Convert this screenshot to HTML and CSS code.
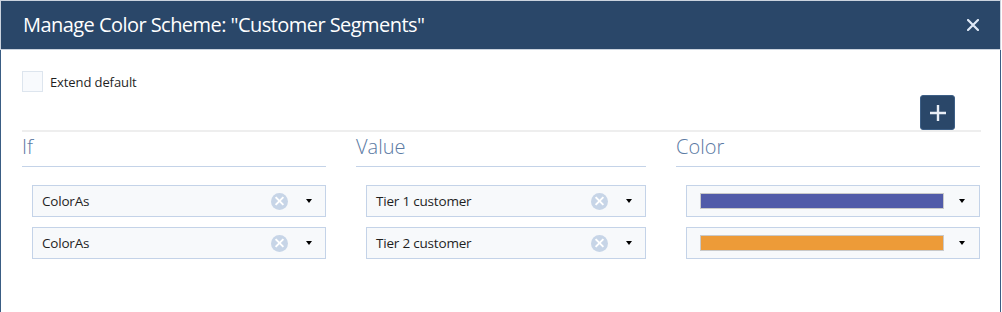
FILE: index.html
```html
<!DOCTYPE html>
<html lang="en">
  <head>
    <meta charset="UTF-8" />
    <title>Manage Color Scheme</title>
    <link rel="stylesheet" href="styles.css">
  </head>
  <body>
    <div class="dialog">
      <header class="dialog-header">
        <span class="dialog-title">Manage Color Scheme: "Customer Segments"</span>
        <button class="close-btn" aria-label="Close">
          <svg width="12" height="12" viewBox="0 0 12 12">
            <path d="M1 1 L11 11 M11 1 L1 11" stroke="#dfe8f5" stroke-width="2.2" stroke-linecap="round" />
          </svg>
        </button>
      </header>

      <div class="dialog-body">
        <label class="check-row">
          <span class="checkbox"></span>
          <span>Extend default</span>
        </label>

        <div class="toolbar">
          <button class="add-btn" aria-label="Add rule">
            <svg width="18" height="18" viewBox="0 0 18 18">
              <path d="M9 1 V17 M1 9 H17" stroke="#e9eef6" stroke-width="2.4" />
            </svg>
          </button>
        </div>

        <div class="rules">
          <div class="col-head">If</div>
          <div class="col-head">Value</div>
          <div class="col-head">Color</div>

          <div class="cell">
            <div class="select">
              <span class="select-text">ColorAs</span>
              <span class="clear"></span>
              <span class="caret"></span>
            </div>
          </div>
          <div class="cell">
            <div class="select">
              <span class="select-text">Tier 1 customer</span>
              <span class="clear"></span>
              <span class="caret"></span>
            </div>
          </div>
          <div class="cell">
            <div class="select color-select">
              <span class="swatch swatch-blue"></span>
              <span class="caret"></span>
            </div>
          </div>

          <div class="cell">
            <div class="select">
              <span class="select-text">ColorAs</span>
              <span class="clear"></span>
              <span class="caret"></span>
            </div>
          </div>
          <div class="cell">
            <div class="select">
              <span class="select-text">Tier 2 customer</span>
              <span class="clear"></span>
              <span class="caret"></span>
            </div>
          </div>
          <div class="cell">
            <div class="select color-select">
              <span class="swatch swatch-orange"></span>
              <span class="caret"></span>
            </div>
          </div>
        </div>
      </div>
    </div>
  </body>
</html>
```

FILE: styles.css
```css
:root {
  --navy: #2a4769;
  --edge: #3a5d84;
  --line: #c4d3e8;
  --field-bg: #f7f9fb;
  --head-text: #5b7aa3;
  --font-family: 'Open Sans', 'Noto Sans', sans-serif;
}

* {
  box-sizing: border-box;
}

body {
  margin: 0;
  font-family: var(--font-family);
  background: #ffffff;
  color: #1f1f1f;
}

.dialog {
  width: 1001px;
  height: 312px;
  border-left: 1px solid var(--edge);
  border-right: 1px solid var(--edge);
  background: #ffffff;
}

.dialog-header {
  margin: 0 -1px;
  height: 50px;
  border: 1px solid #cbd3de;
  background: var(--navy);
  display: flex;
  align-items: center;
  justify-content: space-between;
  padding: 0 21px 0 22px;
}

.dialog-title {
  color: #ffffff;
  font-size: 20px;
  line-height: 48px;
  letter-spacing: -0.55px;
}

.close-btn {
  background: none;
  border: none;
  padding: 0;
  width: 12px;
  height: 12px;
  display: flex;
  cursor: pointer;
}

.dialog-body {
  padding: 21px 20px 0 21px;
}

.check-row {
  display: flex;
  align-items: center;
  gap: 7px;
  font-size: 13px;
  letter-spacing: -0.1px;
  height: 21px;
}

.checkbox {
  width: 21px;
  height: 21px;
  border: 1px solid #dde5ee;
  background: #f8fafd;
}

.toolbar {
  display: flex;
  justify-content: flex-end;
  padding-right: 25px;
  margin-top: 3px;
}

.add-btn {
  width: 35px;
  height: 35px;
  border: 1px solid #3d5f86;
  border-radius: 3px;
  background: var(--navy);
  display: flex;
  align-items: center;
  justify-content: center;
  padding: 0;
  cursor: pointer;
}

.rules {
  display: grid;
  grid-template-columns: 304px 290px 304px;
  column-gap: 30px;
  row-gap: 10px;
  border-top: 2px solid #eeeeee;
  width: 959px;
}

.col-head {
  font-size: 20px;
  font-weight: 300;
  line-height: 24px;
  color: var(--head-text);
  padding: 3px 0 7px;
  border-bottom: 1px solid var(--line);
  margin-bottom: 8px;
}

.cell {
  padding-left: 10px;
}

.select {
  height: 32px;
  border: 1px solid var(--line);
  background: var(--field-bg);
  display: flex;
  align-items: center;
  padding: 0 13px 0 9px;
  font-size: 13.5px;
  letter-spacing: -0.2px;
}

.select-text {
  flex: 1;
}

.clear {
  position: relative;
  width: 17px;
  height: 17px;
  border-radius: 50%;
  background: #c7d5e7;
  margin-right: 18px;
}

.clear::before,
.clear::after {
  content: "";
  position: absolute;
  left: 3px;
  top: 7.5px;
  width: 11px;
  height: 2px;
  background: #ffffff;
  transform: rotate(45deg);
}

.clear::after {
  transform: rotate(-45deg);
}

.caret {
  width: 0;
  height: 0;
  border-left: 3.5px solid transparent;
  border-right: 3.5px solid transparent;
  border-top: 4px solid #000000;
}

.color-select {
  padding: 0 14px 0 13px;
}

.swatch {
  flex: 1;
  height: 16px;
  border: 1px solid #c9c9c9;
  margin-right: 15px;
}

.swatch-blue {
  background: #515ba9;
}

.swatch-orange {
  background: #ed9b38;
}
```
